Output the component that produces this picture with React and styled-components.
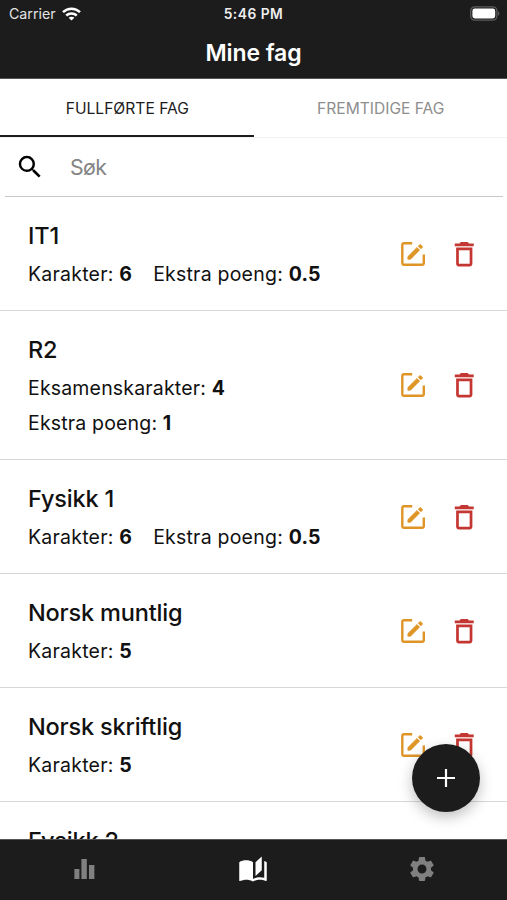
import styled, {createGlobalStyle} from "styled-components";
import {MdSearch, MdDeleteOutline, MdSettings} from "react-icons/md";

const GlobalStyle = createGlobalStyle`
    * {
        box-sizing: border-box;
    }

    body {
        margin: 0;
        font-family: Inter, "Liberation Sans", sans-serif;
    }
`;

const Screen = styled.div`
    position: relative;
    display: flex;
    flex-direction: column;
    height: 900px;
    overflow: hidden;
    background: #fff;
    color: #111;
`;

const Header = styled.header`
    flex: none;
    height: 79px;
    background: #1c1c1c;
    color: #fff;
    border-bottom: 1px solid #555;
`;

const StatusBar = styled.div`
    display: grid;
    grid-template-columns: 1fr auto 1fr;
    align-items: center;
    height: 27px;
    padding: 0 7px;
`;

const Carrier = styled.div`
    display: flex;
    align-items: center;
    gap: 6px;
    padding-left: 2px;
    color: #e4e4e4;
    font-size: 14.2px;
`;

const Clock = styled.div`
    color: #eee;
    font-size: 13.8px;
    font-weight: 600;
    letter-spacing: 0.5px;
`;

const Battery = styled.svg`
    justify-self: end;
`;

const Title = styled.h1`
    margin: 0;
    text-align: center;
    font-size: 23px;
    font-weight: 600;
    line-height: 52px;
    letter-spacing: -0.1px;
`;

const Tabs = styled.div`
    display: flex;
    flex: none;
    height: 59px;
    border-bottom: 1px solid #f3f3f3;
`;

const Tab = styled.div`
    flex: 1;
    height: 58px;
    padding-left: 1px;
    text-align: center;
    font-size: 15.6px;
    line-height: 60px;
    color: ${({$active}) => ($active ? "#1c1c1c" : "#8e8e8e")};
    border-bottom: ${({$active}) => ($active ? "2px solid #1c1c1c" : "none")};
`;

const SearchField = styled.div`
    display: flex;
    flex: none;
    align-items: center;
    gap: 25px;
    height: 59px;
    margin: 0 4px 0 5px;
    padding-left: 10px;
    border-bottom: 1px solid #c8c8c8;
    color: #000;
`;

const Placeholder = styled.span`
    color: #858585;
    font-size: 21.3px;
    letter-spacing: -0.6px;
`;

const List = styled.main`
    flex: 1;
    min-height: 0;
    overflow: hidden;
`;

const Row = styled.section`
    display: flex;
    align-items: center;
    justify-content: space-between;
    height: ${({$tall}) => ($tall ? 149 : 114)}px;
    padding: 0 28px;
    border-bottom: 1px solid #d8d8d8;
`;

const Subject = styled.h2`
    margin: 0;
    font-size: 23.5px;
    font-weight: 500;
    line-height: 40px;
    letter-spacing: -0.18px;
`;

const Details = styled.div`
    display: flex;
    flex-direction: ${({$stacked}) => ($stacked ? "column" : "row")};
    column-gap: 21px;
    min-height: 35px;
    padding-top: 1px;
    font-size: 19.5px;
    line-height: ${({$stacked}) => ($stacked ? 34.5 : 35)}px;
    letter-spacing: ${({$stacked}) => ($stacked ? 0.17 : 0.22)}px;
    white-space: nowrap;
`;

const Value = styled.b`
    font-weight: 700;
`;

const Actions = styled.div`
    display: flex;
    align-items: center;
    gap: 22px;
    margin-right: -1px;
`;

const DeleteIcon = styled(MdDeleteOutline)`
    margin-top: 1px;
    color: #c43631;
`;

const AddButton = styled.button`
    position: absolute;
    right: 27px;
    bottom: 88px;
    display: flex;
    align-items: center;
    justify-content: center;
    width: 68px;
    height: 68px;
    padding: 0;
    border: none;
    border-radius: 50%;
    background: #1c1c1c;
    box-shadow: 0 5px 14px rgba(0, 0, 0, 0.25);
`;

const NavBar = styled.nav`
    display: flex;
    flex: none;
    height: 61px;
    padding: 0 1px 2px 0;
    background: #1c1c1c;
    border-top: 1px solid #555;
`;

const NavItem = styled.div`
    display: flex;
    flex: 1;
    justify-content: center;
    align-items: center;
    color: ${({$active}) => ($active ? "#fff" : "#808080")};
`;

const subjects = [
    {name: "IT1", details: [["Karakter", "6"], ["Ekstra poeng", "0.5"]]},
    {name: "R2", stacked: true, details: [["Eksamenskarakter", "4"], ["Ekstra poeng", "1"]]},
    {name: "Fysikk 1", details: [["Karakter", "6"], ["Ekstra poeng", "0.5"]]},
    {name: "Norsk muntlig", details: [["Karakter", "5"]]},
    {name: "Norsk skriftlig", details: [["Karakter", "5"]]},
    {name: "Fysikk 2", details: []},
];

function WifiIcon() {
    return (
        <svg width="19" height="14" viewBox="0 0 19 14" fill="none" stroke="#fff" strokeWidth="2.5">
            <path d="M1 5.2C5.8.6 13.2.6 18 5.2" />
            <path d="M4.2 8.5c3-2.8 7.6-2.8 10.6 0" />
            <path d="M9.5 13.6 6.6 10.7c1.6-1.4 4.2-1.4 5.8 0z" fill="#fff" stroke="none" />
        </svg>
    );
}

function BatteryIcon() {
    return (
        <Battery width="30" height="15" viewBox="0 0 30 15">
            <rect x="0.7" y="0.9" width="26.2" height="13.2" rx="4" fill="none" stroke="#5c5c5c" strokeWidth="1.3" />
            <rect x="2.4" y="2.6" width="22.8" height="9.8" rx="2.4" fill="#fff" />
            <path d="M28 5.3c1.8.6 1.8 3.8 0 4.4z" fill="#5c5c5c" />
        </Battery>
    );
}

function EditIcon() {
    return (
        <svg width="26" height="26" viewBox="0 0 26 26" fill="none" stroke="#de9526">
            <path d="M12.2 2.2H3.9a1.6 1.6 0 0 0-1.6 1.6v18.4a1.6 1.6 0 0 0 1.6 1.6h18.3a1.6 1.6 0 0 0 1.6-1.6v-8.8" strokeWidth="2.4" />
            <g fill="#de9526" strokeWidth="0.8" strokeLinejoin="round">
                <path d="M7.9 15.6v2.6h2.6l9.1-9.1-2.6-2.6z" />
                <path d="m18.3 5.2 2.6 2.6 1.3-1.3c.4-.4.4-.8 0-1.2l-1.4-1.4c-.4-.4-.8-.4-1.2 0z" />
            </g>
        </svg>
    );
}

function BarsIcon() {
    return (
        <svg width="21" height="20" viewBox="0 0 21 20" fill="currentColor">
            <rect x="0.4" y="10" width="5" height="10" />
            <rect x="7.4" y="0" width="5.4" height="20" />
            <rect x="15" y="6" width="5.4" height="14" />
        </svg>
    );
}

function BookIcon() {
    return (
        <svg width="30" height="30" viewBox="0 0 24 24" fill="currentColor">
            <path d="M19 2 14 6.5v11l5-4.5V2M6.5 5C4.55 5 2.45 5.4 1 6.5v14.66c0 .25.25.5.5.5.1 0 .15-.07.25-.07 1.35-.65 3.3-1.09 4.75-1.09 1.95 0 4.05.4 5.5 1.5 1.35-.85 3.8-1.5 5.5-1.5 1.65 0 3.35.31 4.75 1.06.1.05.15.03.25.03.25 0 .5-.25.5-.5V6.5c-.6-.45-1.25-.75-2-1V19c-1.1-.35-2.3-.5-3.5-.5-1.7 0-4.15.65-5.5 1.5V6.5C10.55 5.4 8.45 5 6.5 5z" />
        </svg>
    );
}

function SubjectRow({subject}) {
    return (
        <Row $tall={subject.stacked}>
            <div>
                <Subject>{subject.name}</Subject>
                <Details $stacked={subject.stacked}>
                    {subject.details.map(([label, value]) => (
                        <span key={label}>
                            {label}: <Value>{value}</Value>
                        </span>
                    ))}
                </Details>
            </div>
            <Actions>
                <EditIcon />
                <DeleteIcon size={32.5} />
            </Actions>
        </Row>
    );
}

function App() {
    return (
        <>
            <GlobalStyle />
            <Screen>
                <Header>
                    <StatusBar>
                        <Carrier>
                            Carrier
                            <WifiIcon />
                        </Carrier>
                        <Clock>5:46 PM</Clock>
                        <BatteryIcon />
                    </StatusBar>
                    <Title>Mine fag</Title>
                </Header>

                <Tabs>
                    <Tab $active>FULLFØRTE FAG</Tab>
                    <Tab>FREMTIDIGE FAG</Tab>
                </Tabs>

                <SearchField>
                    <MdSearch size={30} />
                    <Placeholder>Søk</Placeholder>
                </SearchField>

                <List>
                    {subjects.map((subject) => (
                        <SubjectRow key={subject.name} subject={subject} />
                    ))}
                </List>

                <NavBar>
                    <NavItem>
                        <BarsIcon />
                    </NavItem>
                    <NavItem $active>
                        <BookIcon />
                    </NavItem>
                    <NavItem>
                        <MdSettings size={30} />
                    </NavItem>
                </NavBar>

                <AddButton aria-label="Legg til fag">
                    <svg width="18" height="18" viewBox="0 0 18 18" stroke="#fff" strokeWidth="2.2">
                        <path d="M9 0v18M0 9h18" />
                    </svg>
                </AddButton>
            </Screen>
        </>
    );
}

export default App;
